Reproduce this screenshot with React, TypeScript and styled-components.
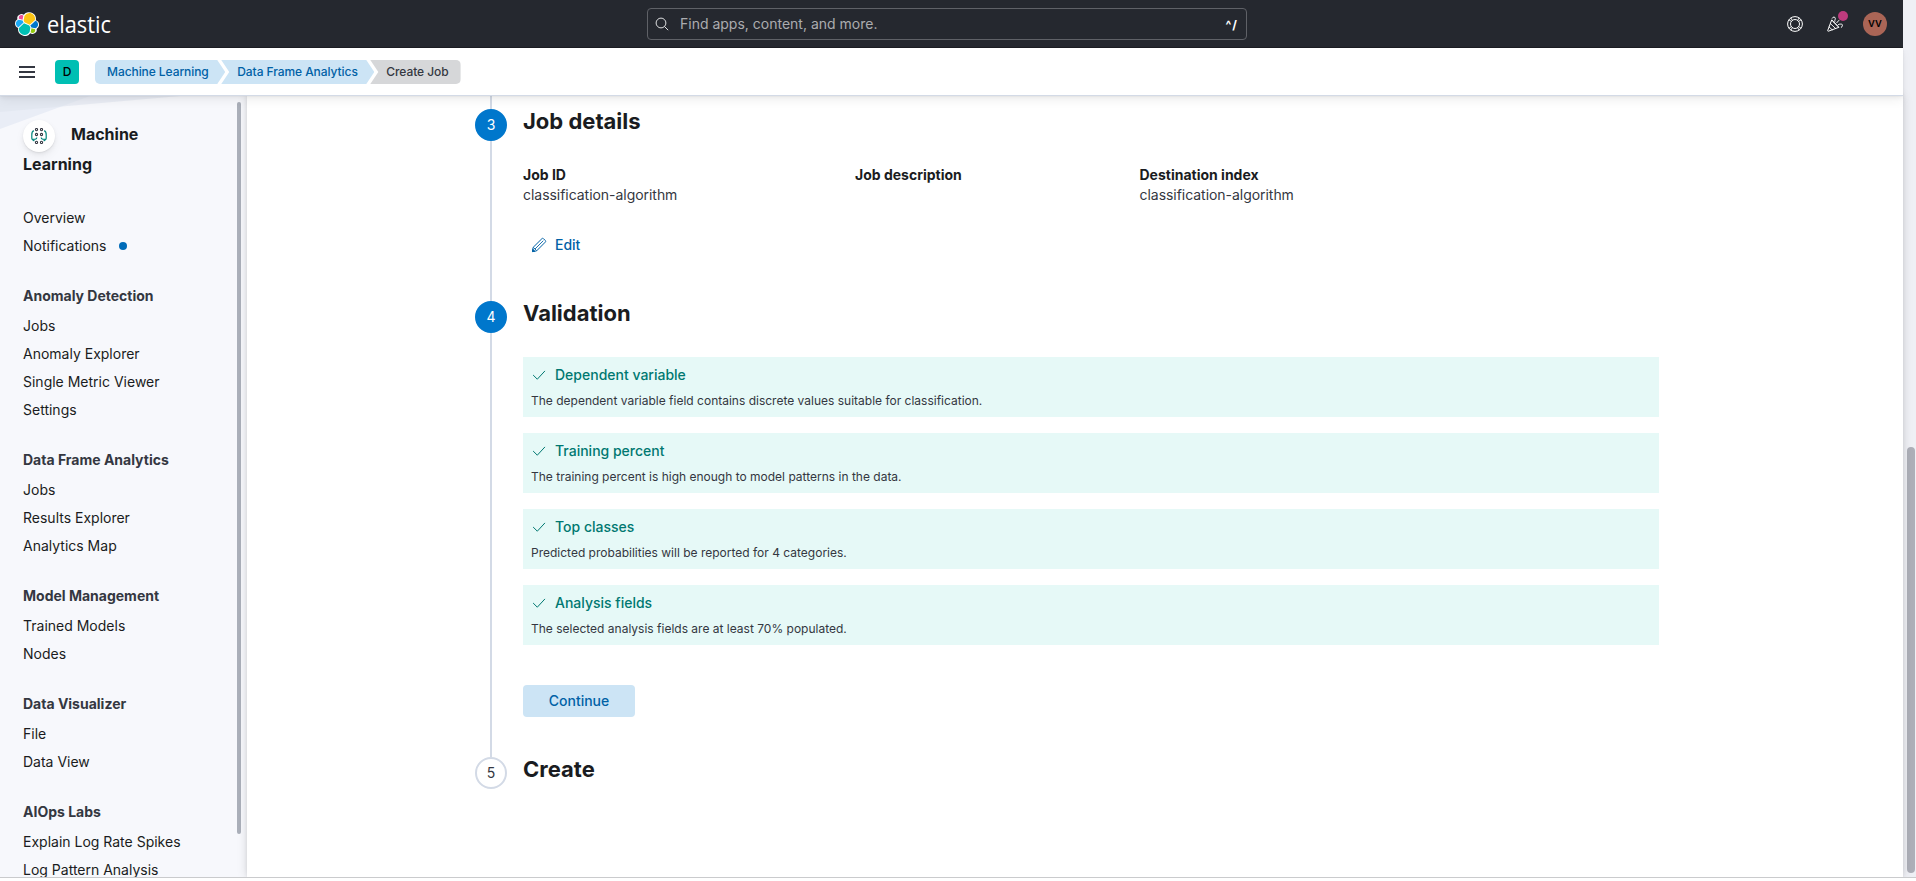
import React from 'react';
import styled, { createGlobalStyle } from 'styled-components';

const GlobalStyle = createGlobalStyle`
  *, *::before, *::after { box-sizing: border-box; }
  body {
    margin: 0;
    background: #fff;
    color: #343741;
    font-family: Inter, "Liberation Sans", sans-serif;
    font-size: 14px;
    line-height: 20px;
  }
  h1, h2, h3, p, ul, ol, dl, dd, dt { margin: 0; padding: 0; }
  ul, ol { list-style: none; }
  svg { display: block; flex: none; }
`;

const Viewport = styled.div`
  display: flex;
  height: 878px;
  border-bottom: 1px solid #cacbcd;
  overflow: hidden;
`;

const Page = styled.div`
  flex: 1;
  min-width: 0;
  display: flex;
  flex-direction: column;
`;

const PageScroll = styled.div`
  width: 13px;
  padding: 447px 1px 4px 4px;
  background: #eff0f5;
  display: flex;
`;

const PageThumb = styled.div`
  flex: 1;
  border-radius: 4px;
  background: #adafb8;
`;

/* ---------- top bar ---------- */

const TopBar = styled.header`
  height: 48px;
  flex: none;
  display: flex;
  align-items: center;
  padding: 0 16px 0 7px;
  background: #25282f;
  border-bottom: 1px solid #1d1e24;
`;

const BarSide = styled.div<{ $end?: boolean }>`
  flex: 1;
  display: flex;
  align-items: center;
  justify-content: ${(p) => (p.$end ? 'flex-end' : 'flex-start')};
`;

const Brand = styled.div`
  display: flex;
  align-items: center;
  gap: 8px;
  padding-left: 8px;
`;

const SearchBox = styled.div`
  width: 600px;
  height: 32px;
  display: flex;
  align-items: center;
  padding: 0 8px 0 7px;
  border: 1px solid #5f6167;
  border-radius: 4px;
  color: #abacaf;
`;

const SearchText = styled.span`
  flex: 1;
  padding-left: 11px;
`;

const Shortcut = styled.span`
  color: #fff;
  font-size: 12px;
  font-weight: 700;
  letter-spacing: 1px;
  padding-top: 3px;
`;

const BarIcon = styled.div`
  position: relative;
  width: 40px;
  display: flex;
  justify-content: center;
`;

const NewsDot = styled.span`
  position: absolute;
  top: -5px;
  right: 7px;
  width: 10px;
  height: 10px;
  border-radius: 50%;
  background: #bd3b7d;
`;

const UserAvatar = styled.div`
  width: 24px;
  height: 24px;
  margin-left: 8px;
  border-radius: 50%;
  background: #aa6556;
  color: #000;
  font-size: 12px;
  font-weight: 500;
  line-height: 22px;
  text-align: center;
`;

/* ---------- breadcrumb bar ---------- */

const CrumbBar = styled.div`
  position: relative;
  z-index: 2;
  height: 48px;
  flex: none;
  display: flex;
  align-items: center;
  padding-left: 19px;
  background: #fff;
  border-bottom: 1px solid #d3dae6;
  box-shadow: 0 0.7px 1.4px rgba(0, 0, 0, 0.07), 0 1.9px 4px rgba(0, 0, 0, 0.05),
    0 4.5px 10px rgba(0, 0, 0, 0.05);
`;

const MenuIcon = styled.div`
  width: 16px;
  height: 12px;
  margin-top: 1px;
  border-top: 2px solid #343741;
  border-bottom: 2px solid #343741;
  display: flex;
  align-items: center;
  &::before {
    content: '';
    flex: 1;
    height: 2px;
    background: #343741;
  }
`;

const SpaceAvatar = styled.div`
  width: 24px;
  height: 24px;
  margin: 1px 16px 0 20px;
  border-radius: 4px;
  background: #00bfb3;
  color: #000;
  font-size: 12px;
  font-weight: 500;
  line-height: 24px;
  text-align: center;
`;

const Crumbs = styled.ol`
  display: flex;
  padding-top: 1px;
`;

const Crumb = styled.li<{ $pos: 'first' | 'middle' | 'last' }>`
  height: 24px;
  font-size: 12px;
  font-weight: 500;
  letter-spacing: -0.07px;
  line-height: 24px;
  white-space: nowrap;
  color: ${(p) => (p.$pos === 'last' ? '#343741' : '#0061a6')};
  background: ${(p) => (p.$pos === 'last' ? '#d6d7d9' : '#cce4f5')};
  margin-left: ${(p) => (p.$pos === 'first' ? '0' : '-4px')};
  padding: 0 ${(p) => (p.$pos === 'last' ? '12px' : '16.500px')} 0
    ${(p) => (p.$pos === 'first' ? '12px' : '16px')};
  border-radius: ${(p) => (p.$pos === 'first' ? '5px 0 0 5px' : p.$pos === 'last' ? '0 5px 5px 0' : '0')};
  clip-path: ${(p) =>
    p.$pos === 'first'
      ? 'polygon(0 0, calc(100% - 8px) 0, 100% 50%, calc(100% - 8px) 100%, 0 100%)'
      : p.$pos === 'middle'
        ? 'polygon(0 0, calc(100% - 8px) 0, 100% 50%, calc(100% - 8px) 100%, 0 100%, 8px 50%)'
        : 'polygon(0 0, 100% 0, 100% 100%, 0 100%, 8px 50%)'};
`;

/* ---------- side navigation ---------- */

const Body = styled.div`
  flex: 1;
  min-height: 0;
  display: flex;
`;

const Sidebar = styled.nav`
  position: relative;
  width: 247px;
  flex: none;
  display: flex;
  justify-content: space-between;
  background: #f7f8fc;
  overflow: hidden;
`;

const Backdrop = styled.svg`
  position: absolute;
  top: 0;
  left: 0;
`;

const NavContent = styled.div`
  position: relative;
  padding: 23px 0 0 23px;
  width: 220px;
`;

const NavThumb = styled.div`
  width: 4px;
  height: 732px;
  margin: 6px 6px 0 0;
  border-radius: 2px;
  background: #abb0ba;
`;

const SolutionHeader = styled.div`
  height: 85px;
`;

const SolutionTitle = styled.h2`
  width: 150px;
  color: #1a1c21;
  font-size: 16px;
  font-weight: 700;
  line-height: 30px;
`;

const SolutionIcon = styled.span`
  display: inline-flex;
  align-items: center;
  justify-content: center;
  width: 32px;
  height: 32px;
  margin: -6px 16px -6px 0;
  vertical-align: middle;
  border-radius: 50%;
  background: #fff;
  box-shadow: 0 0.7px 1.4px rgba(0, 0, 0, 0.07), 0 1.9px 4px rgba(0, 0, 0, 0.05),
    0 4.5px 10px rgba(0, 0, 0, 0.05);
`;

const NavGroup = styled.div`
  margin-bottom: 22px;
`;

const NavHeading = styled.h3`
  height: 30px;
  padding-top: 1px;
  font-size: 14px;
  font-weight: 700;
  line-height: 26px;
`;

const NavItem = styled.a`
  display: flex;
  align-items: center;
  height: 28px;
  color: #1a1c21;
  white-space: nowrap;
`;

const NoticeDot = styled.span`
  width: 8px;
  height: 8px;
  margin-left: 12px;
  border-radius: 50%;
  background: #006bb8;
`;

/* ---------- wizard ---------- */

const Main = styled.main`
  position: relative;
  z-index: 1;
  flex: 1;
  padding: 0 244px 0 228px;
  background: #fff;
  box-shadow: 0 0 10px rgba(0, 0, 0, 0.14), 0 0 4px rgba(0, 0, 0, 0.08);
`;

const LeadLine = styled.div`
  width: 2px;
  height: 13px;
  margin-left: 15px;
  background: #d3dae6;
`;

const Step = styled.li<{ $height: number }>`
  display: flex;
  gap: 16px;
  height: ${(p) => p.$height}px;
`;

const Rail = styled.div`
  width: 32px;
  display: flex;
  flex-direction: column;
  align-items: center;
`;

const StepNumber = styled.span<{ $pending?: boolean }>`
  width: 32px;
  height: 32px;
  flex: none;
  display: flex;
  align-items: center;
  justify-content: center;
  border-radius: 50%;
  border: 2px solid ${(p) => (p.$pending ? '#d3dae6' : '#0077cc')};
  background: ${(p) => (p.$pending ? '#fff' : '#0077cc')};
  color: ${(p) => (p.$pending ? '#343741' : '#fff')};
`;

const RailLine = styled.span`
  width: 2px;
  flex: 1;
  background: #d3dae6;
`;

const StepBody = styled.div`
  flex: 1;
`;

const StepTitle = styled.h2`
  color: #1a1c21;
  font-size: 22px;
  font-weight: 700;
  line-height: 24px;
`;

const Details = styled.dl`
  display: grid;
  grid-template-columns: 332px 284.5px 1fr;
  padding-top: 31px;
`;

const DetailName = styled.dt`
  color: #1a1c21;
  font-weight: 700;
  line-height: 21px;
`;

const DetailValue = styled.dd`
  line-height: 20px;
  letter-spacing: -0.04px;
`;

const EditButton = styled.button`
  display: flex;
  align-items: center;
  gap: 8px;
  height: 32px;
  margin-top: 24px;
  padding: 0 8px;
  border: 0;
  background: none;
  color: #0061a6;
  font: 500 14px/20px Inter, "Liberation Sans", sans-serif;
`;

const Callouts = styled.div`
  display: grid;
  gap: 16px;
  padding-top: 32px;
`;

const Callout = styled.div`
  height: 60px;
  padding: 8px;
  background: #e6f9f7;
`;

const CalloutTitle = styled.p`
  display: flex;
  align-items: center;
  gap: 8px;
  color: #007871;
  font-weight: 500;
  line-height: 20px;
`;

const CalloutText = styled.p`
  margin-top: 7px;
  font-size: 12px;
  line-height: 18px;
`;

const ContinueButton = styled.button`
  width: 112px;
  height: 32px;
  margin-top: 40px;
  padding: 0;
  border: 0;
  border-radius: 4px;
  background: #cce4f5;
  color: #0061a6;
  font: 500 14px/20px Inter, "Liberation Sans", sans-serif;
`;

/* ---------- drawings ---------- */

const ElasticMark = () => (
  <svg width="24" height="24" viewBox="0 0 32 32">
    <path
      fill="#fff"
      d="M32 16.77a6.334 6.334 0 00-1.14-3.63 6.269 6.269 0 00-3.08-2.3 9.044 9.044 0 00-4.1-9.17 9.025 9.025 0 00-12.02 2.15A4.789 4.789 0 005.9 3.79 4.806 4.806 0 003.2 9.5 6.37 6.37 0 00.01 15.28 6.35 6.35 0 004.23 21.23a9.04 9.04 0 0016.13 7.05 4.76 4.76 0 005.77 0 4.79 4.79 0 002.72-5.71A6.38 6.38 0 0032 16.77"
    />
    <path fill="#FEC514" d="M12.58 13.787l7.002 3.211 7.066-6.213a7.849 7.849 0 00.152-1.557c0-4.287-3.475-7.775-7.745-7.775a7.74 7.74 0 00-6.389 3.382l-1.176 6.119 1.09 2.833z" />
    <path fill="#00BFB3" d="M5.333 21.214a7.86 7.86 0 00-.147 1.575c0 4.3 3.487 7.799 7.772 7.799 2.576 0 4.978-1.282 6.431-3.426l1.166-6.096-1.556-2.985-7.03-3.215-6.636 6.348z" />
    <path fill="#F04E98" d="M5.288 9.067l4.8 1.137L11.14 4.73a3.785 3.785 0 00-2.286-.77 3.797 3.797 0 00-3.786 3.8c0 .447.076.887.22 1.307" />
    <path fill="#1BA9F5" d="M4.872 10.214c-2.145.713-3.645 2.772-3.645 5.046 0 2.215 1.366 4.192 3.417 4.977l6.734-6.107-1.237-2.65-5.269-1.266" />
    <path fill="#93C90E" d="M20.87 27.161c.66.51 1.472.79 2.302.79a3.8 3.8 0 003.787-3.8 3.8 3.8 0 00-.22-1.303l-4.797-1.125-1.072 5.438" />
    <path fill="#0077CC" d="M21.848 20.556l5.28 1.238c2.145-.711 3.646-2.77 3.646-5.046 0-2.211-1.37-4.185-3.423-4.968l-6.905 6.063 1.402 2.713z" />
  </svg>
);

const Wordmark = () => (
  <svg width="72" height="36" viewBox="0 0 72 36">
    <text x="0" y="26.500" fill="#fff" fontFamily="'Open Sans', sans-serif" fontWeight="400" fontSize="23" textLength="64" lengthAdjust="spacingAndGlyphs">
      elastic
    </text>
  </svg>
);

const SearchIcon = () => (
  <svg width="14" height="14" viewBox="0 0 14 14" fill="none" stroke="#dfe0e2" strokeWidth="1">
    <circle cx="6" cy="6" r="4.9" />
    <path d="M9.600 9.600l3.300 3.300" strokeLinecap="round" />
  </svg>
);

const HelpIcon = () => (
  <svg width="16" height="16" viewBox="0 0 16 16" fill="none" stroke="#fff">
    <circle cx="8" cy="8" r="7.4" />
    <circle cx="8" cy="8" r="4.5" />
    <path
      d="M3.800 1.800l1.500 2.600M1.800 3.800l2.600 1.500M12.200 1.800l-1.500 2.600M14.200 3.800l-2.600 1.500M3.800 14.200l1.500-2.600M1.800 12.200l2.600-1.500M12.200 14.200l-1.500-2.600M14.200 12.200l-2.600-1.500"
      strokeWidth="0.9"
    />
  </svg>
);

const CheerIcon = () => (
  <svg width="16" height="16" viewBox="0 0 16 16" fill="none" stroke="#fff" strokeLinecap="round" strokeLinejoin="round">
    <path d="M4.600 4.200L.7 14.500c-.1.5.2.8.7.7l10.200-3.800z" />
    <path d="M3.400 7.600l5.200 4.900M2.100 11l3.100 2.800M5.600 5.200l5 5" strokeWidth="0.9" />
    <path d="M5.200 2.200c.6-1.600 3-1.600 3.100.2.1 1.300-.9 1.800-.5 3M11.200 8.700c1.200-.9 2-.4 2.900-.7 1.500-.2 2 2.600.2 3.400M9.700 6.800l2.200-2.400" />
  </svg>
);

const MlIcon = () => (
  <svg width="16" height="16" viewBox="0 0 16 16" fill="none">
    <g stroke="#00857c" strokeWidth="1.2">
      <path d="M2.800 2.600C1.200 3.300.7 5 .8 7v3.300c0 .8.5 1.300 1.100 1.700l1.500 1M1.200 11.300l3.200-.2c.9-.1 1.400-.6 1.400-1.500" />
      <path d="M13.200 2.600c1.600.7 2.100 2.400 2 4.400v3.300c0 .8-.5 1.300-1.100 1.700l-1.500 1M14.800 11.300l-3.200-.2c-.9-.1-1.400-.6-1.400-1.500" />
    </g>
    <g stroke="#343741" strokeWidth="1.1">
      <circle cx="5.500" cy="1.600" r="1.100" />
      <circle cx="10.500" cy="1.600" r="1.100" />
      <circle cx="5.500" cy="6.500" r="1.100" />
      <circle cx="10.500" cy="6.500" r="1.100" />
      <circle cx="5.500" cy="14.400" r="1.100" />
      <circle cx="10.500" cy="14.400" r="1.100" />
    </g>
  </svg>
);

const PencilIcon = () => (
  <svg width="16" height="16" viewBox="0 0 16 16" fill="none" stroke="#0061a6" strokeLinejoin="round">
    <path d="M10.900 1.700c.5-.5 1.100-.5 1.600 0l1.800 1.800c.5.5.5 1.100 0 1.600L5.600 13.900 1.500 14.600 2.100 10.400z" />
    <path d="M3.900 12.100L12.300 3.700M2.400 10.400l3.200 3.200" strokeWidth="0.900" />
    <path d="M1.800 12.300L1.500 14.600l2.300-.4z" fill="#0061a6" />
  </svg>
);

const CheckIcon = () => (
  <svg width="16" height="16" viewBox="0 0 16 16" fill="none" stroke="#007871" strokeLinecap="round">
    <path d="M2.400 8.300L6.300 12.200 13.700 4.200" />
  </svg>
);

/* ---------- data ---------- */

const navGroups = [
  { title: 'Anomaly Detection', items: ['Jobs', 'Anomaly Explorer', 'Single Metric Viewer', 'Settings'] },
  { title: 'Data Frame Analytics', items: ['Jobs', 'Results Explorer', 'Analytics Map'] },
  { title: 'Model Management', items: ['Trained Models', 'Nodes'] },
  { title: 'Data Visualizer', items: ['File', 'Data View'] },
  { title: 'AIOps Labs', items: ['Explain Log Rate Spikes', 'Log Pattern Analysis'] },
];

const details = [
  { name: 'Job ID', value: 'classification-algorithm' },
  { name: 'Job description', value: '' },
  { name: 'Destination index', value: 'classification-algorithm' },
];

const checks = [
  { title: 'Dependent variable', text: 'The dependent variable field contains discrete values suitable for classification.' },
  { title: 'Training percent', text: 'The training percent is high enough to model patterns in the data.' },
  { title: 'Top classes', text: 'Predicted probabilities will be reported for 4 categories.' },
  { title: 'Analysis fields', text: 'The selected analysis fields are at least 70% populated.' },
];

export default function App() {
  return (
    <>
      <GlobalStyle />
      <Viewport>
        <Page>
          <TopBar>
            <BarSide>
              <Brand>
                <ElasticMark />
                <Wordmark />
              </Brand>
            </BarSide>
            <SearchBox>
              <SearchIcon />
              <SearchText>Find apps, content, and more.</SearchText>
              <Shortcut>^/</Shortcut>
            </SearchBox>
            <BarSide $end>
              <BarIcon>
                <HelpIcon />
              </BarIcon>
              <BarIcon>
                <CheerIcon />
                <NewsDot />
              </BarIcon>
              <UserAvatar>vv</UserAvatar>
            </BarSide>
          </TopBar>
          <CrumbBar>
            <MenuIcon />
            <SpaceAvatar>D</SpaceAvatar>
            <Crumbs>
              <Crumb $pos="first">Machine Learning</Crumb>
              <Crumb $pos="middle">Data Frame Analytics</Crumb>
              <Crumb $pos="last">Create Job</Crumb>
            </Crumbs>
          </CrumbBar>
          <Body>
            <Sidebar>
              <Backdrop width="247" height="40" viewBox="0 0 247 40">
                <path d="M0 0H90L0 33z" fill="#e9edf6" />
                <path d="M0 0H180L0 16z" fill="#dfe4ef" fillOpacity="0.6" />
              </Backdrop>
              <NavContent>
                <SolutionHeader>
                  <SolutionTitle>
                    <SolutionIcon>
                      <MlIcon />
                    </SolutionIcon>
                    Machine Learning
                  </SolutionTitle>
                </SolutionHeader>
                <NavGroup>
                  <NavItem>Overview</NavItem>
                  <NavItem>
                    Notifications
                    <NoticeDot />
                  </NavItem>
                </NavGroup>
                {navGroups.map((group) => (
                  <NavGroup key={group.title}>
                    <NavHeading>{group.title}</NavHeading>
                    {group.items.map((item) => (
                      <NavItem key={item}>{item}</NavItem>
                    ))}
                  </NavGroup>
                ))}
              </NavContent>
              <NavThumb />
            </Sidebar>
            <Main>
              <LeadLine />
              <ol>
                <Step $height={192}>
                  <Rail>
                    <StepNumber>3</StepNumber>
                    <RailLine />
                  </Rail>
                  <StepBody>
                    <StepTitle>Job details</StepTitle>
                    <Details>
                      {details.map((d) => (
                        <div key={d.name}>
                          <DetailName>{d.name}</DetailName>
                          <DetailValue>{d.value}</DetailValue>
                        </div>
                      ))}
                    </Details>
                    <EditButton>
                      <PencilIcon />
                      Edit
                    </EditButton>
                  </StepBody>
                </Step>
                <Step $height={456}>
                  <Rail>
                    <StepNumber>4</StepNumber>
                    <RailLine />
                  </Rail>
                  <StepBody>
                    <StepTitle>Validation</StepTitle>
                    <Callouts>
                      {checks.map((c) => (
                        <Callout key={c.title}>
                          <CalloutTitle>
                            <CheckIcon />
                            {c.title}
                          </CalloutTitle>
                          <CalloutText>{c.text}</CalloutText>
                        </Callout>
                      ))}
                    </Callouts>
                    <ContinueButton>Continue</ContinueButton>
                  </StepBody>
                </Step>
                <Step $height={32}>
                  <Rail>
                    <StepNumber $pending>5</StepNumber>
                  </Rail>
                  <StepBody>
                    <StepTitle>Create</StepTitle>
                  </StepBody>
                </Step>
              </ol>
            </Main>
          </Body>
        </Page>
        <PageScroll>
          <PageThumb />
        </PageScroll>
      </Viewport>
    </>
  );
}
